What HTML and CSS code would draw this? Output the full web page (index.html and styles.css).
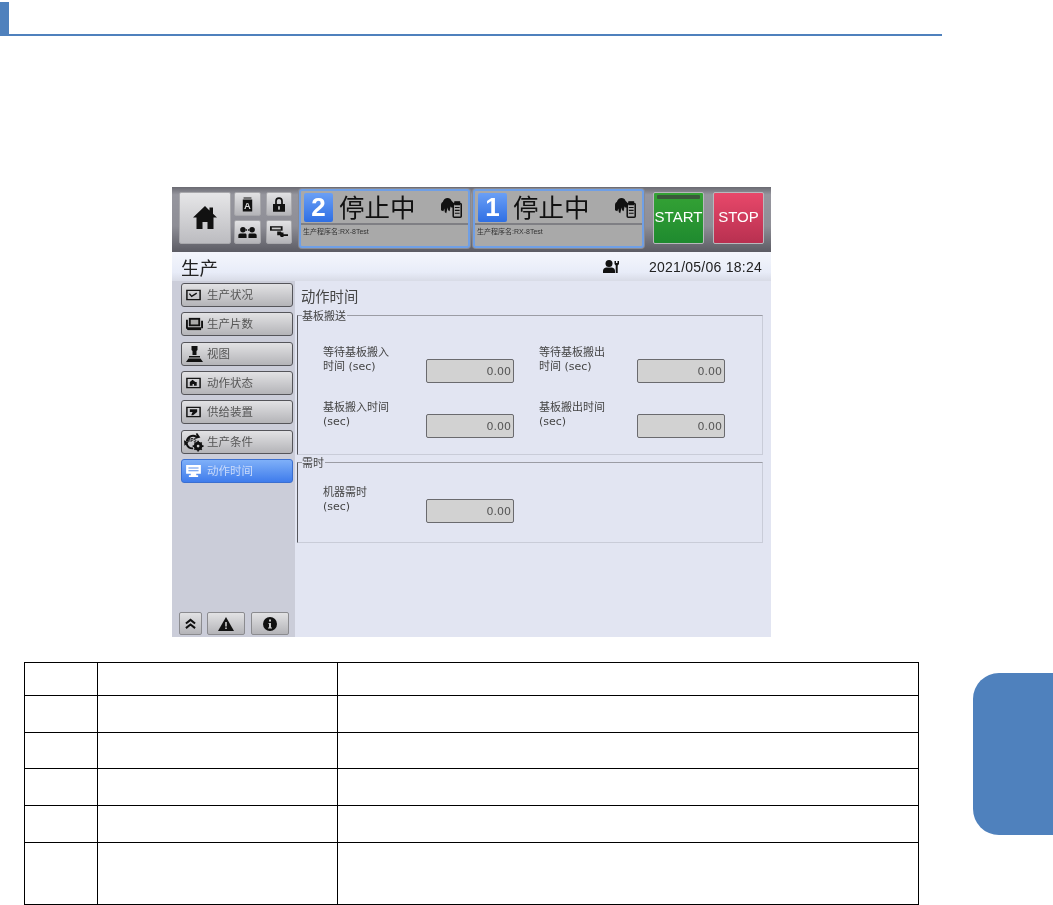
FILE: index.html
```html
<!DOCTYPE html>
<html lang="zh">
<head>
<meta charset="utf-8">
<title>动作时间</title>
<link rel="stylesheet" href="styles.css">
</head>
<body>
<header class="doc-head"><div class="doc-mark"></div></header>

<main class="hmi">
  <div class="topbar">
    <button class="btn home">
      <svg viewBox="0 0 24 23" width="24" height="23"><path d="M12 0 0 11.500h3.500V23h6v-7h5v7h6V11.500H24L20 7.700V1.500h-3.500v2.900z"/></svg>
    </button>
    <div class="mini-grid">
      <button class="btn mini"><svg viewBox="0 0 14 18" width="11" height="15"><path d="M2 0h10v1.500H2zM1 2.500h12V18H1z"/><text x="7" y="15" class="mini-a">A</text></svg></button>
      <button class="btn mini"><svg viewBox="0 0 14 17" width="12" height="15"><path d="M2.500 8V4.500a4.500 4.500 0 0 1 9 0V8H9.500V4.500a2.500 2.500 0 0 0-5 0V8zM0 8h14v9H0z"/><rect x="6" y="10.500" width="2" height="4" fill="#ccc"/></svg></button>
      <button class="btn mini"><svg viewBox="0 0 20 12" width="19" height="11"><circle cx="5" cy="3" r="3"/><circle cx="15" cy="3" r="3"/><path d="M0 12V9Q0 7 2 7h6q1 0 1 2v3zM11 12V9q0-2 1-2h6q2 0 2 2v3z"/><path d="M8 2.500h1.500V4H8zM10.500 2.500H12V4h-1.500z"/></svg></button>
      <button class="btn mini"><svg viewBox="0 0 20 14" width="18" height="13"><path d="M0 0h14v5H0z"/><rect x="2" y="1.500" width="10" height="2" fill="#ccc"/><path d="M8 6h4l1 1h2v2h5v2h-5v1h-3l-1-2H8z"/></svg></button>
    </div>
    <section class="lane">
      <div class="lane-main">
        <span class="lane-num">2</span>
        <span class="lane-state">停止中</span>
        <svg class="lane-icon" viewBox="0 0 24 22" width="23" height="21"><path d="M1 8q0-2 2-3 1-4 5-4 3 0 4 3l2 2v4q-1 2-2 1l-1-1-1 5-1.500-1L8 11l-1.500 6L5 16l-.5-4-1 3L1 14z"/><rect x="13.800" y="6.800" width="8.400" height="14.400" rx="1" fill="none" stroke="#111" stroke-width="1.600"/><path d="M15.500 5h5v3h-5zM15.500 11h5M15.500 14h5M15.500 17h5" stroke="#111" stroke-width="1.200"/></svg>
      </div>
      <div class="lane-prog">生产程序名:RX-8Test</div>
    </section>
    <section class="lane">
      <div class="lane-main">
        <span class="lane-num">1</span>
        <span class="lane-state">停止中</span>
        <svg class="lane-icon" viewBox="0 0 24 22" width="23" height="21"><path d="M1 8q0-2 2-3 1-4 5-4 3 0 4 3l2 2v4q-1 2-2 1l-1-1-1 5-1.500-1L8 11l-1.500 6L5 16l-.5-4-1 3L1 14z"/><rect x="13.800" y="6.800" width="8.400" height="14.400" rx="1" fill="none" stroke="#111" stroke-width="1.600"/><path d="M15.500 5h5v3h-5zM15.500 11h5M15.500 14h5M15.500 17h5" stroke="#111" stroke-width="1.200"/></svg>
      </div>
      <div class="lane-prog">生产程序名:RX-8Test</div>
    </section>
    <button class="action start"><span class="start-led"></span>START</button>
    <button class="action stop">STOP</button>
  </div>

  <div class="titlebar">
    <span class="screen-name">生产</span>
    <svg class="user-icon" viewBox="0 0 17 13" width="17" height="13"><circle cx="6" cy="3.500" r="3.500"/><path d="M0 13v-2q0-3 3-3.500h6q3 .5 3 3.500v2z"/><path d="M11.500 1H13v2h1.500V1H16v3l-1.300 1.500V13h-2V5.500L11.500 4z"/></svg>
    <span class="clock">2021/05/06 18:24</span>
  </div>

  <div class="workspace">
    <nav class="side">
      <ul class="menu">
        <li><button class="btn menu-btn"><svg viewBox="0 0 16 12" width="15" height="11"><rect x=".8" y=".8" width="14.400" height="10.400" fill="none" stroke="#111" stroke-width="1.600"/><path d="m3.500 4.500 2.500 3 5.500-3.500" fill="none" stroke="#111" stroke-width="1.500"/></svg><span>生产状况</span></button></li>
        <li><button class="btn menu-btn"><svg viewBox="0 0 18 13" width="17" height="13"><path d="M3 0h12v9H3z"/><path d="M0 2h2v8h14v3H2l-2-2z"/><path d="M16 3h2v8h-2z"/><rect x="5" y="2" width="8" height="5" fill="#aaa"/></svg><span>生产片数</span></button></li>
        <li><button class="btn menu-btn"><svg viewBox="0 0 17 16" width="17" height="16"><path d="M5.500 0h6v4l-1 1v4h-4V5l-1-1zM3 10h11v1.500H3zM2.500 12.500h12L17 16H0z"/></svg><span>视图</span></button></li>
        <li><button class="btn menu-btn"><svg viewBox="0 0 16 12" width="15" height="11"><rect x=".8" y=".8" width="14.400" height="10.400" fill="none" stroke="#111" stroke-width="1.600"/><path d="M4 9V5l3-2.500L10 5h1.500v4H8.500V7H7v2z"/></svg><span>动作状态</span></button></li>
        <li><button class="btn menu-btn"><svg viewBox="0 0 16 12" width="15" height="11"><rect x=".8" y=".8" width="14.400" height="10.400" fill="none" stroke="#111" stroke-width="1.600"/><path d="M4 3h8v3L7.500 9.500H5.500l1.500-3.500H4z"/></svg><span>供给装置</span></button></li>
        <li><button class="btn menu-btn"><svg class="gear-ico" viewBox="0 0 22 22" width="20" height="20"><path d="M2 10a8 8 0 0 1 12-6l-1-2 1.500-1L18 6l-5 1.500-.5-1.500A5.500 5.500 0 0 0 4.500 10.500zM10 19a8 8 0 0 1-8-5L.5 15 0 9l5 2.500-1 1A5.500 5.500 0 0 0 10 17z"/><text x="8.500" y="11" class="gear-mps">MPS</text><circle cx="15.500" cy="15.500" r="3.500" fill="none" stroke="#111" stroke-width="2.500"/><path d="M15.500 9.500v12M9.500 15.500h12M11.500 11.500l8 8M19.500 11.500l-8 8" stroke="#111" stroke-width="1.800"/><circle cx="15.500" cy="15.500" r="1.500" fill="#ccc"/></svg><span>生产条件</span></button></li>
        <li><button class="btn menu-btn active"><svg viewBox="0 0 16 13" width="15" height="12"><path d="M0 0h16v9.500h-5V11h2v2H3v-2h2V9.500H0z" fill="#fff"/><path d="M2.500 3.200h11M2.500 6.200h11" stroke="#5a90ee" stroke-width="1.200"/></svg><span>动作时间</span></button></li>
      </ul>
      <div class="side-tools">
        <button class="btn tool tool-up"><svg viewBox="0 0 12 12" width="11" height="12"><path d="m1 5.500 5-4 5 4M1 10.500l5-4 5 4" fill="none" stroke="#111" stroke-width="2.200"/></svg></button>
        <button class="btn tool tool-wide"><svg viewBox="0 0 16 14" width="16" height="14"><path d="M8 0 16 14H0z"/><path d="M7.200 5h1.600v4.500H7.200zM7.200 10.500h1.600V12H7.200z" fill="#ccc"/></svg></button>
        <button class="btn tool tool-wide"><svg viewBox="0 0 14 14" width="14" height="14"><circle cx="7" cy="7" r="7"/><path d="M6 2.500h2v2H6zM5.500 6H8v4.500h1v1H5v-1h1V7h-.5z" fill="#ccc"/></svg></button>
      </div>
    </nav>

    <div class="content">
      <h1 class="content-title">动作时间</h1>
      <fieldset class="group group-a">
        <legend>基板搬送</legend>
        <div class="fields">
          <div class="field"><label>等待基板搬入<br>时间 (sec)</label><output class="value">0.00</output></div>
          <div class="field"><label>等待基板搬出<br>时间 (sec)</label><output class="value">0.00</output></div>
          <div class="field"><label>基板搬入时间<br>(sec)</label><output class="value">0.00</output></div>
          <div class="field"><label>基板搬出时间<br>(sec)</label><output class="value">0.00</output></div>
        </div>
      </fieldset>
      <fieldset class="group group-b">
        <legend>需时</legend>
        <div class="fields">
          <div class="field"><label>机器需时<br>(sec)</label><output class="value">0.00</output></div>
        </div>
      </fieldset>
    </div>
  </div>
</main>

<table class="spec">
  <tbody>
    <tr class="r1"><td class="c1"></td><td class="c2"></td><td></td></tr>
    <tr class="r2"><td></td><td></td><td></td></tr>
    <tr class="r3"><td></td><td></td><td></td></tr>
    <tr class="r4"><td></td><td></td><td></td></tr>
    <tr class="r5"><td></td><td></td><td></td></tr>
    <tr class="r6"><td></td><td></td><td></td></tr>
  </tbody>
</table>

<div class="chapter-tab"></div>
</body>
</html>
```

FILE: styles.css
```css
* { box-sizing: border-box; }
html, body { margin: 0; padding: 0; }
body {
  position: relative;
  height: 905px;
  overflow: hidden;
  background: #fff;
  font-family: "Liberation Sans", "Noto Sans CJK SC", sans-serif;
  color: #222;
}
button { font-family: inherit; padding: 0; margin: 0; }

.doc-head {
  margin-top: 2px;
  width: 942px;
  height: 34px;
  border-bottom: 2px solid #4f81bd;
}
.doc-mark { width: 9px; height: 32px; background: #4f81bd; }

.hmi {
  margin: 151px 0 0 172px;
  width: 599px;
  height: 450px;
  display: flex;
  flex-direction: column;
  background: #e2e5f2;
  filter: blur(.35px);
}

.btn {
  display: flex;
  align-items: center;
  justify-content: center;
  border: 1px solid #8b8b8f;
  border-radius: 2px;
  background: linear-gradient(#e2e2e4, #b4b4b8);
  color: #111;
}
.btn svg { fill: #111; }

.topbar {
  flex: none;
  height: 65px;
  display: flex;
  align-items: flex-start;
  padding: 5px 0 0 7px;
  background: linear-gradient(#6a6a72 0, #96969e 12%, #8e8e96 60%, #5c5c64 100%);
}
.home { width: 52px; height: 52px; margin-right: 3px; padding: 0 1px 1px 0; border-color: #a8a8ac; background: linear-gradient(#e6e6e8, #bcbcc0); }
.mini-grid {
  display: grid;
  grid-template-columns: 27px 26px;
  grid-template-rows: 24px 24px;
  gap: 4px 5px;
  margin-right: 7px;
}
.mini { width: 100%; height: 100%; border-color: #a8a8ac; }
.mini-a { font: bold 12px "Liberation Sans", sans-serif; fill: #ddd; text-anchor: middle; }
.gear-mps { font: bold 5px "Liberation Sans", sans-serif; fill: #111; text-anchor: middle; }

.lane {
  flex: none;
  width: 171px;
  height: 59px;
  margin: -3px 3px 0 0;
  display: flex;
  flex-direction: column;
  border: 2px solid #6f9fe6;
  border-radius: 3px;
  background: #a9a9a9;
  box-shadow: 0 0 0 1px #8a8a90;
}
.lane-main {
  flex: none;
  height: 34px;
  display: flex;
  align-items: center;
  padding: 0 5px 0 3px;
  border-bottom: 2px solid #7f7f84;
}
.lane-num {
  width: 29px;
  height: 29px;
  display: flex;
  align-items: center;
  justify-content: center;
  border-radius: 2px;
  background: linear-gradient(#6a9ff5, #2f6fe4);
  color: #fff;
  font-size: 26px;
  font-weight: bold;
}
.lane-state {
  margin: -2px 0 0 6px;
  font-family: "Noto Sans CJK SC", sans-serif;
  font-size: 25.500px;
  line-height: 30px;
  color: #111;
}
.lane-icon { margin-left: auto; fill: #111; }
.lane-prog {
  padding: 1px 0 0 2px;
  font-size: 7px;
  line-height: 11px;
  color: #333;
}

.action {
  position: relative;
  flex: none;
  width: 51px;
  height: 52px;
  padding-bottom: 3px;
  border: 1px solid #b8b8bc;
  border-radius: 2px;
  color: #fff;
  font-size: 15px;
}
.start { margin-left: 6px; background: linear-gradient(#35a335, #1f8a2f); }
.stop { margin-left: 9px; background: linear-gradient(#e8486a, #b83050); }
.start-led {
  position: absolute;
  left: 3px;
  right: 3px;
  top: 2px;
  height: 4px;
  border-radius: 1px;
  background: #3a5a3a;
}

.titlebar {
  flex: none;
  height: 29px;
  display: flex;
  align-items: center;
  padding: 0 9px 0 9px;
  background: linear-gradient(#f4f6fc, #e8ecf8 70%, #d8dbe6);
}
.screen-name {
  font-family: "Noto Sans CJK SC", sans-serif;
  font-size: 18.500px;
  color: #222;
}
.user-icon { margin: 0 0 0 auto; fill: #111; }
.clock { margin: 1px 0 0 29px; font-size: 14px; letter-spacing: .25px; color: #222; }

.workspace { flex: 1; display: flex; min-height: 0; }
.side {
  flex: none;
  width: 123px;
  display: flex;
  flex-direction: column;
  justify-content: space-between;
  padding: 2px 2px 2px 0;
  background: #cbcdd9;
}
.menu {
  list-style: none;
  margin: 0;
  padding: 0 0 0 9px;
  display: flex;
  flex-direction: column;
  gap: 5.330px;
}
.menu-btn {
  width: 112px;
  height: 24px;
  justify-content: flex-start;
  border: 1px solid #55555a;
  border-radius: 3px;
  color: #555;
  font-family: "Noto Sans CJK SC", sans-serif;
  font-size: 11.500px;
  position: relative;
  padding: 0 0 2px 25px;
}
.menu-btn svg { position: absolute; left: 4px; top: 50%; transform: translateY(-50%); }
.menu-btn .gear-ico { left: 2px; }
.menu-btn.active {
  border-color: #3b6fd0;
  background: linear-gradient(#7fb0f8, #3f7cec);
  color: #c9dafa;
}
.side-tools { display: flex; gap: 5px; padding-left: 7px; }
.tool { height: 23px; }
.tool-up { width: 23px; }
.tool-wide { width: 38px; }
.tool-wide:last-child { margin-left: 1px; }

.content { flex: 1; min-width: 0; padding: 5px 8px 0 2px; }
.content-title {
  margin: 0 0 1px 4px;
  font-family: "Noto Sans CJK SC", sans-serif;
  font-size: 14.300px;
  line-height: 20px;
  font-weight: normal;
  color: #444;
}
.group {
  margin: 0;
  padding: 0;
  border: 1px solid #c9ccd8;
  border-top-color: #9b9ca4;
  border-left-color: #55565c;
  min-inline-size: 0;
}
.group legend {
  margin-left: 4px;
  padding: 0 1px 0 0;
  font-family: "Noto Sans CJK SC", sans-serif;
  font-size: 11px;
  line-height: 15px;
  color: #444;
}
.group-a { height: 147px; margin-top: 2px; }
.group-b { height: 88px; margin-top: 0; }
.fields {
  display: grid;
  grid-template-columns: 191px 191px;
  grid-auto-rows: 55px;
  column-gap: 25px;
  padding: 15px 0 0 25px;
}
.group-a .fields { padding-top: 22px; }
.field { display: flex; align-items: flex-start; }
.field label {
  flex: none;
  width: 103px;
  margin-top: 1px;
  font-family: "DejaVu Sans", "Noto Sans CJK SC", sans-serif;
  font-size: 11px;
  line-height: 14px;
  color: #444;
}
.field:nth-child(even) label { width: 98px; }
.value {
  flex: none;
  display: block;
  width: 88px;
  height: 24px;
  margin-top: 14px;
  padding-right: 2px;
  border: 1px solid #6a6a6e;
  border-radius: 2px;
  background: #d2d2d2;
  font-family: "DejaVu Sans", sans-serif;
  font-size: 11px;
  line-height: 24px;
  text-align: right;
  color: #555;
}

.spec {
  margin: 25px 0 0 24px;
  width: 895px;
  border-collapse: collapse;
  table-layout: fixed;
}
.spec td { border: 1px solid #000; padding: 0; }
.c1 { width: 73px; }
.c2 { width: 240px; }
.r1 { height: 33px; }
.r2 { height: 37px; }
.r3 { height: 36px; }
.r4 { height: 37px; }
.r5 { height: 37px; }
.r6 { height: 62px; }

.chapter-tab {
  position: absolute;
  right: 0;
  top: 673px;
  width: 80px;
  height: 162px;
  border-radius: 26px 0 0 26px;
  background: #4f81bd;
}
```
